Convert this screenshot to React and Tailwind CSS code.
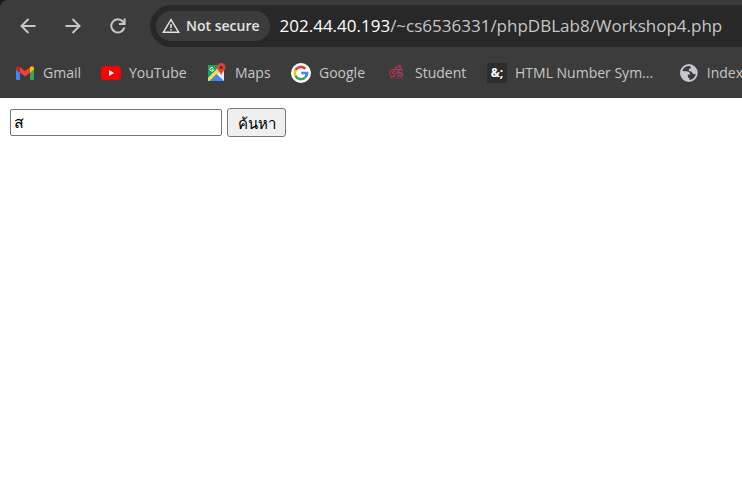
import React from "react";

const stroke = { fill: "none", stroke: "currentColor", strokeWidth: 2 };

function BackIcon() {
  return (
    <svg width="16" height="16" viewBox="0 0 16 16" {...stroke}>
      <path d="M15.5 8H2M8.500 1L1.500 8l7 7" />
    </svg>
  );
}

function ForwardIcon() {
  return (
    <svg width="16" height="16" viewBox="0 0 16 16" {...stroke}>
      <path d="M.5 8H14M7.500 1l7 7-7 7" />
    </svg>
  );
}

function ReloadIcon() {
  return (
    <svg width="16" height="16" viewBox="0 0 16 16" {...stroke}>
      <path d="M14.300 9.500A6.600 6.600 0 1 1 12.800 3.500L14.500 5.500" />
      <path d="M14.600 .5v5.500H9" />
    </svg>
  );
}

function WarningIcon() {
  return (
    <svg width="18" height="16" viewBox="0 0 18 16" fill="none" stroke="currentColor" strokeWidth="1.500">
      <path d="M9 1.600L16.600 14.200H1.400z" />
      <path d="M9 6v4M9 11v1.600" />
    </svg>
  );
}

function GmailIcon() {
  return (
    <svg width="20" height="20" viewBox="0 0 20 20">
      <path fill="#4285f4" d="M1 6.500l4 3V17H2.300A1.300 1.300 0 0 1 1 15.700z" />
      <path fill="#34a853" d="M15 9.500l4-3v9.200a1.300 1.300 0 0 1-1.300 1.300H15z" />
      <path fill="#fbbc04" d="M15 4.300l.8-.6C17.100 2.700 19 3.600 19 5.200v1.600l-4 3z" />
      <path fill="#c5221f" d="M5 4.300l-.8-.6C2.900 2.700 1 3.600 1 5.200v1.600l4 3z" />
      <path fill="#ea4335" d="M5 4.300l5 3.800 5-3.800v5.500l-5 3.700-5-3.700z" />
    </svg>
  );
}

function YouTubeIcon() {
  return (
    <svg width="20" height="20" viewBox="0 0 20 20">
      <rect x="0" y="3" width="20" height="14" rx="3.500" fill="#f00" />
      <path fill="#fff" d="M8 7l5.200 3L8 13z" />
    </svg>
  );
}

function MapsIcon() {
  return (
    <svg width="20" height="20" viewBox="0 0 20 20">
      <path fill="#e8eaed" d="M2 2h14a1 1 0 0 1 1 1v15H1V3a1 1 0 0 1 1-1z" />
      <path fill="#1e9e5a" d="M2 2h12L1 15V3a1 1 0 0 1 1-1z" />
      <path fill="#fdd835" d="M1 15.500L11 6l2 2.500L3 18H2a1 1 0 0 1-1-1z" />
      <path fill="#4285f4" d="M9.500 11l7.500 7H2.500z" />
      <path fill="none" stroke="#fff" strokeWidth="1" d="M6.200 5.300a1.800 1.800 0 1 0 .3 1.400H4.900" />
      <path fill="#db4437" d="M14.200 0a4.200 4.200 0 0 0-4.200 4.200c0 3.300 3.500 4.300 4.200 8.300.7-4 4.200-5 4.200-8.300A4.200 4.200 0 0 0 14.200 0z" />
      <circle cx="14.200" cy="4.400" r="1.600" fill="#7b231c" />
    </svg>
  );
}

function GoogleIcon() {
  return (
    <svg width="20" height="20" viewBox="0 0 20 20">
      <circle cx="10" cy="10" r="10" fill="#fff" />
      <g fill="none" strokeWidth="2.600">
        <path stroke="#ea4335" d="M4.500 7.200A6.100 6.100 0 0 1 14.400 5.800" />
        <path stroke="#fbbc05" d="M4.500 12.800a6.100 6.100 0 0 1 0-5.600" />
        <path stroke="#34a853" d="M14 14.600a6.100 6.100 0 0 1-9.500-1.800" />
        <path stroke="#4285f4" d="M10.200 10H16a6.100 6.100 0 0 1-2 4.600" />
      </g>
    </svg>
  );
}

function StudentIcon() {
  return (
    <svg width="20" height="20" viewBox="0 0 20 20" fill="none" strokeWidth="1.200">
      <path stroke="#b8304a" d="M8.500 7.500C6 5.500 2.800 7 2.800 10.200s2.400 4 4.700 3M8.500 7.500L5.500 9.500l2.500 3L3.500 15M7.500 4.800c2.500.2 3-1.800 5-2.500l1.500 1M11 4c2-.5 4 1 3 3.300" />
      <path stroke="#a8406c" d="M16 7.500c-2-1.500-5-.5-5 1.200s5 .8 5 2.800-4 2-5.500.5M8.500 10.500c2-1.500 5 0 7.500 0M8 6.500c2-1 4 .3 6 0" />
      <path stroke="#7c3446" d="M7 15h10" />
    </svg>
  );
}

function SymbolsIcon() {
  return (
    <span className="flex size-5 items-center justify-center bg-[#2d2d2d] font-['Open_Sans',sans-serif] text-xs font-bold text-white">
      &amp;;
    </span>
  );
}

function GlobeIcon() {
  return (
    <svg width="20" height="20" viewBox="0 0 20 20">
      <circle cx="10" cy="10" r="8" fill="none" stroke="#c4c7cb" strokeWidth="2" />
      <path fill="#c4c7cb" d="M2 8l5 .2c2.500.2 4.300 1 4.300 3.300H9v2.800l1.500 1V18C5 18.500 1 14 2 8zM11 2l4 2.200 2.800 5.300c-.5 1.400-1.800 1.900-3.300 1.400-1.500-.5-.8-2-2.300-2.300-2-.4-2.200-.2-2.200-1.600 0-1.300.7-1.500 1.500-1.500.8-.1.900-.6.300-1.500z" />
    </svg>
  );
}

const bookmarks = [
  { label: "Gmail", icon: GmailIcon, width: "w-[66px]" },
  { label: "YouTube", icon: YouTubeIcon, width: "w-[86px]" },
  { label: "Maps", icon: MapsIcon, width: "w-16" },
  { label: "Google", icon: GoogleIcon, width: "w-[76px]" },
  { label: "Student", icon: StudentIcon, width: "w-20" },
  { label: "HTML Number Sym...", icon: SymbolsIcon, width: "w-[172px]" },
  { label: "Index", icon: GlobeIcon, width: "w-16" },
];

export default function App() {
  return (
    <div className="min-h-screen overflow-hidden bg-white font-['Open_Sans',sans-serif]">
      <div className="bg-[#1c1c1c]">
        <header className="rounded-tl-lg bg-[#3c3c3c] text-[#c7c7c7]">
          <div className="flex items-center pt-[5px] pl-5">
            <nav className="flex shrink-0 items-center gap-[29px]">
              <button type="button" aria-label="Back"><BackIcon /></button>
              <button type="button" aria-label="Forward"><ForwardIcon /></button>
              <button type="button" aria-label="Reload"><ReloadIcon /></button>
            </nav>
            <div className="ml-6 flex h-[42px] min-w-0 flex-1 items-center rounded-l-full bg-[#282828] pl-1.5">
              <button type="button" className="flex h-[30px] shrink-0 items-center gap-1.5 rounded-full bg-[#3c3c3c] pr-2.5 pl-1.5 text-sm font-semibold text-[#e3e3e3]">
                <WarningIcon />
                Not secure
              </button>
              <a href="#top" className="ml-2.5 text-[17px] whitespace-nowrap text-[#c7c7c7]">
                <span className="text-white">202.44.40.193</span>/~cs6536331/phpDBLab8/Workshop4.php
              </a>
            </div>
          </div>
          <nav className="flex h-[51px] items-center gap-5 overflow-hidden pl-[15px]">
            {bookmarks.map(({ label, icon: Icon, width }) => (
              <a key={label} href="#top" className={`flex shrink-0 items-center gap-2 text-sm whitespace-nowrap ${width}`}>
                <Icon />
                {label}
              </a>
            ))}
          </nav>
        </header>
      </div>
      <main id="top" className="px-2.5 py-2.5 text-black">
        <form className="flex items-center gap-[5px]" onSubmit={(e) => e.preventDefault()}>
          <input
            type="text"
            aria-label="ค้นหา"
            defaultValue="ส"
            className="h-[27px] w-[212px] rounded-xs border border-[#767676] bg-white px-[3px] text-base outline-none"
          />
          <button type="submit" className="h-[29px] w-[59px] rounded-[3px] border border-[#767676] bg-[#efefef] text-[15px] leading-5 whitespace-nowrap">
            ค้นหา
          </button>
        </form>
      </main>
    </div>
  );
}
